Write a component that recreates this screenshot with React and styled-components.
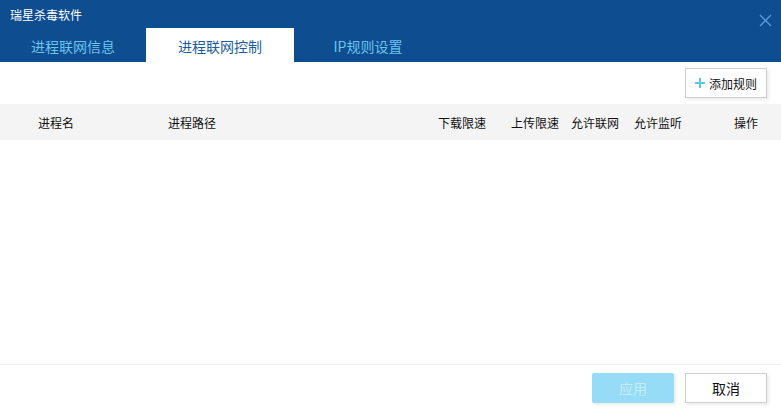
import React from "react";
import styled, { createGlobalStyle } from "styled-components";

const GlobalStyle = createGlobalStyle`
  html, body { margin: 0; padding: 0; background: #fff; }
  body { font-family: "Microsoft YaHei", "Noto Sans CJK SC", "Noto Sans", sans-serif; }
  * { box-sizing: border-box; }
`;

const Window = styled.div`
  width: 781px;
  height: 416px;
  display: flex;
  flex-direction: column;
  background: #fff;
`;

const Header = styled.div`
  background: #0e4d8f;
  display: flex;
  flex-direction: column;
  position: relative;
`;

const TitleRow = styled.div`
  height: 28px;
  display: flex;
  align-items: center;
  padding-left: 10px;
  color: #fff;
  font-size: 12px;
`;

const CloseButton = styled.div`
  position: absolute;
  right: 9px;
  top: 14px;
  width: 13px;
  height: 13px;
  display: flex;
`;

const TabRow = styled.div`
  height: 34px;
  display: flex;
`;

const Tab = styled.div`
  width: ${(p) => p.$width || 148}px;
  display: flex;
  align-items: center;
  justify-content: center;
  font-size: 14px;
  padding-top: 1px;
  color: ${(p) => (p.$active ? "#1a5c9e" : "#6cc3ee")};
  background: ${(p) => (p.$active ? "#fff" : "transparent")};
`;

const Toolbar = styled.div`
  height: 42px;
  display: flex;
  align-items: center;
  justify-content: flex-end;
  padding-right: 14px;
`;

const Button = styled.button`
  width: 82px;
  height: 30px;
  display: flex;
  align-items: center;
  justify-content: center;
  gap: 4px;
  font-family: inherit;
  font-size: ${(p) => p.$size || 14}px;
  color: ${(p) => (p.$primary ? "#c6ecfb" : "#111")};
  background: ${(p) => (p.$primary ? "#96dcf6" : "#fff")};
  border: 1px solid ${(p) => (p.$primary ? "#96dcf6" : "#cfcfcf")};
  border-radius: ${(p) => (p.$primary ? "2px" : "0")};
  box-shadow: 2px 2px 3px rgba(0, 0, 0, 0.08);
  padding: 0;
  cursor: pointer;
`;

const TableHead = styled.div`
  height: 36px;
  background: #f4f4f4;
  display: grid;
  grid-template-columns: 130px 270px 73px 60px 63px 100px 1fr;
  align-items: center;
  padding-left: 38px;
  font-size: 12px;
  color: #111;
`;

const TableBody = styled.div`
  flex: 1;
`;

const Footer = styled.div`
  height: 52px;
  border-top: 1px solid #efefef;
  display: flex;
  align-items: center;
  justify-content: flex-end;
  gap: 11px;
  padding-right: 14px;
  padding-bottom: 5px;
`;

const columns = ["进程名", "进程路径", "下载限速", "上传限速", "允许联网", "允许监听", "操作"];

export default function App() {
  return (
    <>
      <GlobalStyle />
      <Window>
        <Header>
          <TitleRow>瑞星杀毒软件</TitleRow>
          <CloseButton>
            <svg width="13" height="13" viewBox="0 0 13 13">
              <path d="M1 1L12 12M12 1L1 12" stroke="#5a9be0" strokeWidth="1.3" fill="none" />
            </svg>
          </CloseButton>
          <TabRow>
            <Tab $width={146}>进程联网信息</Tab>
            <Tab $active>进程联网控制</Tab>
            <Tab>IP规则设置</Tab>
          </TabRow>
        </Header>
        <Toolbar>
          <Button $size={12}>
            <svg width="10" height="10" viewBox="0 0 10 10">
              <path d="M5 0V10M0 5H10" stroke="#5cc4ea" strokeWidth="2" fill="none" />
            </svg>
            添加规则
          </Button>
        </Toolbar>
        <TableHead>
          {columns.map((c) => (
            <span key={c}>{c}</span>
          ))}
        </TableHead>
        <TableBody />
        <Footer>
          <Button $primary>应用</Button>
          <Button>取消</Button>
        </Footer>
      </Window>
    </>
  );
}
